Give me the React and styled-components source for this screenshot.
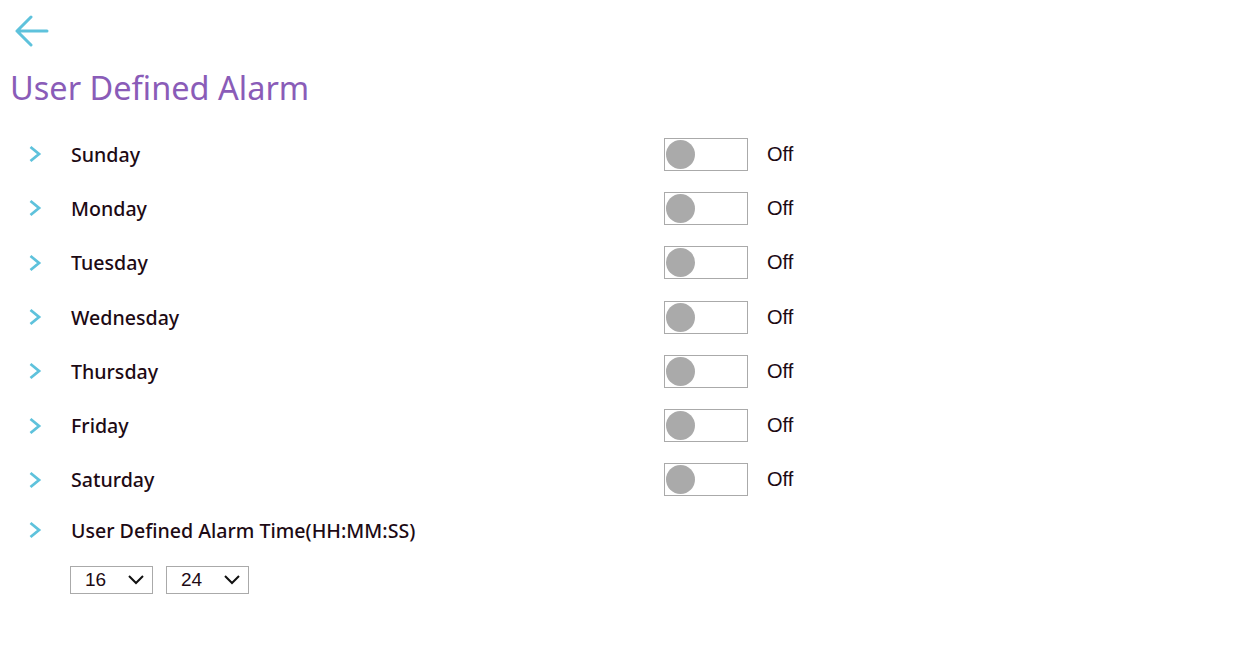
import React from "react";
import styled, { createGlobalStyle } from "styled-components";

const GlobalStyle = createGlobalStyle`
  html, body {
    margin: 0;
    padding: 0;
    background: #ffffff;
  }
  body {
    font-family: "Noto Sans", "Liberation Sans", sans-serif;
    color: #1d0a14;
  }
`;

const days = [
  "Sunday",
  "Monday",
  "Tuesday",
  "Wednesday",
  "Thursday",
  "Friday",
  "Saturday",
];

function App() {
  return (
    <>
      <GlobalStyle />
      <Page>
        <BackButton aria-label="back">
          <svg width="36" height="32" viewBox="0 0 36 32" fill="none">
            <path
              d="M34 16H4M18 2L4 16l14 14"
              stroke="#5ec2dc"
              strokeWidth="3"
              strokeLinecap="round"
              strokeLinejoin="round"
            />
          </svg>
        </BackButton>
        <Title>User Defined Alarm</Title>
        <List>
          {days.map((day) => (
            <Row key={day}>
              <Chevron />
              <Label>{day}</Label>
              <Toggle>
                <Knob />
              </Toggle>
              <State>Off</State>
            </Row>
          ))}
          <Row $short>
            <Chevron />
            <Label>User Defined Alarm Time(HH:MM:SS)</Label>
          </Row>
        </List>
        <Selects>
          <Select>
            <span>16</span>
            <DownArrow />
          </Select>
          <Select>
            <span>24</span>
            <DownArrow />
          </Select>
        </Selects>
      </Page>
    </>
  );
}

function Chevron() {
  return (
    <ChevronIcon width="14" height="18" viewBox="0 0 14 18" fill="none">
      <path
        d="M2.5 2l8.5 7-8.5 7"
        stroke="#5ec2dc"
        strokeWidth="2.8"
        strokeLinecap="butt"
        strokeLinejoin="miter"
      />
    </ChevronIcon>
  );
}

function DownArrow() {
  return (
    <svg width="18" height="12" viewBox="0 0 18 12" fill="none">
      <path d="M2 2l7 7 7-7" stroke="#111" strokeWidth="2" />
    </svg>
  );
}

const Page = styled.div`
  padding: 14px 10px 20px 10px;
`;

const BackButton = styled.button`
  display: block;
  background: none;
  border: none;
  padding: 0;
  margin: 0 0 0 3px;
  height: 36px;
  cursor: pointer;
`;

const Title = styled.h1`
  margin: 18px 0 0 0;
  font-weight: 400;
  font-size: 32.5px;
  line-height: 40px;
  color: #8a5cb8;
`;

const List = styled.div`
  display: flex;
  flex-direction: column;
  margin-top: 19px;
`;

const Row = styled.div`
  display: flex;
  align-items: center;
  height: ${(p) => (p.$short ? "46.5px" : "54.3px")};
`;

const ChevronIcon = styled.svg`
  margin-left: 18px;
  flex: none;
`;

const Label = styled.div`
  margin-left: 29px;
  width: 593px;
  font-size: 19.6px;
  font-weight: 500;
  color: #1d0a14;
  white-space: nowrap;
`;

const Toggle = styled.div`
  box-sizing: border-box;
  width: 84px;
  height: 33px;
  border: 1px solid #aaaaaa;
  display: flex;
  align-items: center;
  padding-left: 1px;
`;

const Knob = styled.div`
  width: 29px;
  height: 29px;
  border-radius: 50%;
  background: #aaaaaa;
`;

const State = styled.span`
  margin-left: 19px;
  font-family: "Liberation Sans", Arial, sans-serif;
  font-size: 20px;
  color: #1d0a14;
`;

const Selects = styled.div`
  display: flex;
  gap: 13px;
  margin: 12px 0 0 60px;
`;

const Select = styled.div`
  box-sizing: border-box;
  width: 83px;
  height: 28px;
  border: 1px solid #aaaaaa;
  display: flex;
  align-items: center;
  justify-content: space-between;
  padding: 0 7px 0 14px;
  font-family: "Liberation Sans", Arial, sans-serif;
  font-size: 19px;
  color: #1d0a14;
`;

export default App;
